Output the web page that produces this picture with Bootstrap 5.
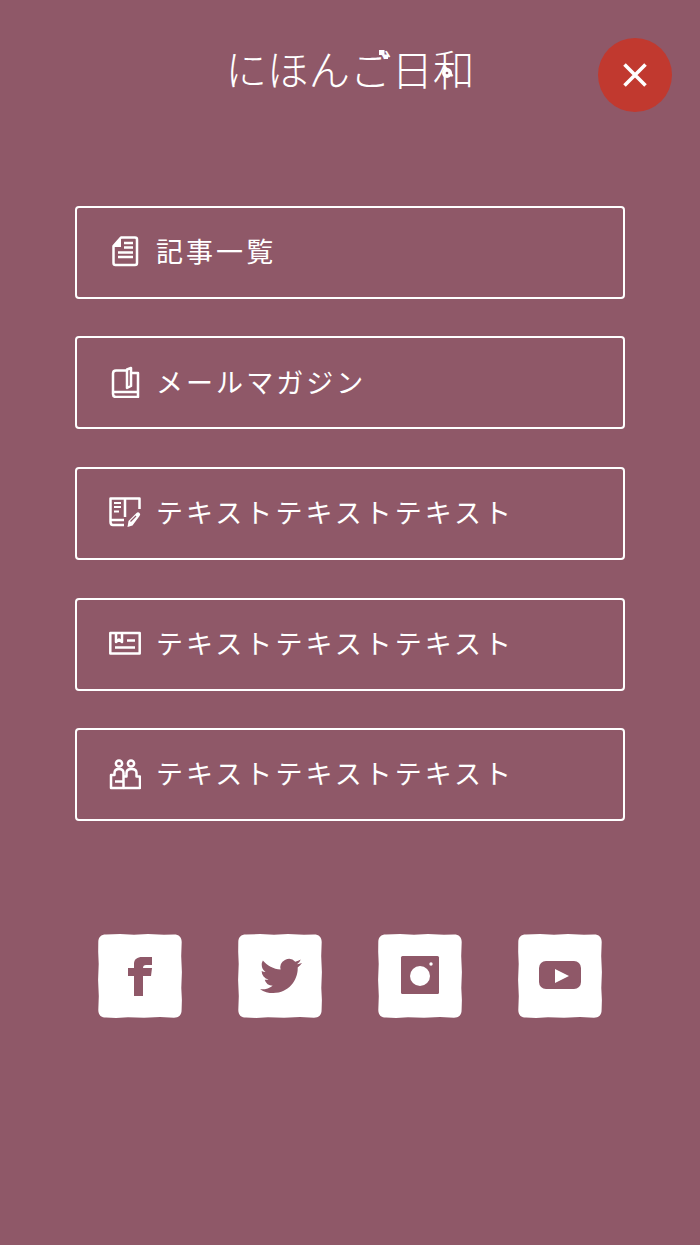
<!DOCTYPE html>
<html lang="ja">
<head>
  <meta charset="UTF-8">
  <title>にほんご日和</title>
  <link rel="stylesheet" href="https://cdn.jsdelivr.net/npm/bootstrap@5.3.0/dist/css/bootstrap.min.css">
  <style>
    body {
      background-color: #8f5868;
      color: #fff;
      font-family: "Noto Sans CJK JP", "Liberation Serif", serif;
    }
    .menu-page {
      width: 700px;
      height: 1245px;
      padding: 43px 75px 0;
    }
    .site-title {
      height: 162.8px;
      font-size: 41.5px;
      line-height: 50px;
      font-weight: 300;
      white-space: nowrap;
    }
    .title-inner {
      display: inline-block;
    }
    .title-dots {
      position: absolute;
      left: 150.5px;
      top: 7px;
      width: 12px;
      height: 12px;
    }
    .title-flower {
      position: absolute;
      left: 217px;
      top: 25px;
      width: 10px;
      height: 10px;
    }
    .close-btn {
      position: absolute;
      top: 38px;
      right: 28px;
      width: 74px;
      height: 74px;
      border: 0;
      border-radius: 50%;
      background-color: #c1392f;
      padding: 0;
    }
    .menu-list {
      gap: 37.6px;
    }
    .menu-item {
      height: 93px;
      padding-left: 32px;
      padding-bottom: 2px;
      gap: 15px;
      border: 2px solid #fff;
      border-radius: 4px;
      color: #fff;
      font-size: 27px;
      letter-spacing: 3.05px;
      font-weight: 400;
      text-decoration: none;
      white-space: nowrap;
    }
    .menu-item:hover {
      color: #fff;
    }
    .social-row {
      margin-top: 112.8px;
      padding: 0 23px;
      gap: 56px;
    }
    .social-row svg {
      display: block;
    }
    .ico-line {
      fill: none;
      stroke: #fff;
      stroke-width: 2.5;
      stroke-linejoin: round;
    }
    .ico-cut {
      fill: #8f5868;
    }
    .tile-bg {
      fill: #fff;
    }
  </style>
</head>
<body>

  <svg width="0" height="0" class="position-absolute">
    <defs>
      <path id="tile" d="M8 .4 L22 .1 L36 .8 L50 .1 L66 .8 L76 .4 C81 .4 83.600 3 83.700 8 L83.200 22 L83.900 38 L83.300 54 L83.900 66 L83.600 76 C83.600 81 81 83.600 76 83.700 L62 83.100 L46 83.800 L30 83.200 L18 83.900 L8 83.600 C3 83.600 .4 81 .3 76 L.8 62 L.1 46 L.7 30 L.2 18 L.3 8 C.4 3 3 .4 8 .4 Z"/>
    </defs>
  </svg>

  <div class="menu-page position-relative">
    <header class="site-title text-center">
      <span class="title-inner position-relative">にほんご日和
        <svg class="title-dots" viewBox="0 0 12 12"><rect x="3" y="0" width="5.500" height="5" fill="#fff"/><rect x="8" y="4.500" width="4" height="4.500" fill="#fff"/></svg>
        <svg class="title-flower" viewBox="0 0 10 10"><circle cx="5" cy="5" r="5" fill="#fff"/><circle cx="5" cy="5" r="1.300" fill="#8f5868"/></svg>
      </span>
    </header>

    <button class="close-btn d-flex align-items-center justify-content-center" type="button" aria-label="Close">
      <svg width="26" height="26" viewBox="0 0 26 26"><path d="M2.500 2.500 L23.500 23.500 M23.500 2.500 L2.500 23.500" stroke="#fff" stroke-width="3.600" fill="none"/></svg>
    </button>

    <nav class="menu-list d-flex flex-column">
      <a class="menu-item d-flex align-items-center" href="#">
        <svg width="32" height="32" viewBox="0 0 32 32">
          <path class="ico-line" d="M4.500 11 L12 2.500 H26 Q28 2.500 28 4.500 V28 Q28 30 26 30 H6.500 Q4.500 30 4.500 28 Z"/>
          <path d="M12 2 V12 H4 Z" fill="#fff"/>
          <path d="M15 8 H24 M15 12.500 H24 M9 17.500 H24 M9 22 H24" stroke="#fff" stroke-width="2.400"/>
        </svg>
        <span>記事一覧</span>
      </a>
      <a class="menu-item d-flex align-items-center" href="#">
        <svg width="32" height="32" viewBox="0 0 32 32">
          <path class="ico-line" d="M18 4.500 H7 Q4 4.500 4 7.500 V28 Q4 31 7 31 H29 V7 H23"/>
          <path class="ico-line" d="M18 3.500 L22 2 V20 L18 22 Z"/>
          <path class="ico-line" d="M4 26 H29"/>
        </svg>
        <span>メールマガジン</span>
      </a>
      <a class="menu-item d-flex align-items-center" href="#">
        <svg width="32" height="32" viewBox="0 0 32 32">
          <path class="ico-line" d="M15 29 H4 Q1.500 29 1.500 26 V2.500 H30.500 V13"/>
          <path class="ico-line" d="M1.500 24 H15 M16 2.500 V21"/>
          <path d="M5 7 H12 M5 11 H12 M5 15.500 H10" stroke="#fff" stroke-width="2.200"/>
          <path d="M18.500 31 L19.500 25 L27.500 17 Q29 15.500 30.500 17 Q32 18.500 30.500 20 L23.500 29.500 Z" fill="#fff"/>
          <path d="M21.500 25.500 L27 20" stroke="#8f5868" stroke-width="1.200"/>
        </svg>
        <span>テキストテキストテキスト</span>
      </a>
      <a class="menu-item d-flex align-items-center" href="#">
        <svg width="32" height="32" viewBox="0 0 32 32">
          <rect class="ico-line" x="1.300" y="6" width="29.400" height="20.500"/>
          <path class="ico-line" d="M7 6 V15 L10 12.500 L13 15 V6"/>
          <path d="M18 13.500 H26 M6 20.500 H26" stroke="#fff" stroke-width="2.400"/>
        </svg>
        <span>テキストテキストテキスト</span>
      </a>
      <a class="menu-item d-flex align-items-center" href="#">
        <svg width="32" height="32" viewBox="0 0 32 32">
          <circle class="ico-line" cx="10" cy="5.500" r="3.100"/>
          <circle class="ico-line" cx="22" cy="5.500" r="3.100"/>
          <path class="ico-line" d="M2 30 V17 H5.500 V15 Q5.500 11 10 11 Q14.500 11 14.500 15 V30 Z"/>
          <path class="ico-line" d="M6 23.500 H14"/>
          <path class="ico-line" d="M14.500 18.500 H17.500 V15 Q17.500 11 22.500 11 Q27.500 11 27.500 15 V18.500 H31 V30 H14.500"/>
        </svg>
        <span>テキストテキストテキスト</span>
      </a>
    </nav>

    <div class="social-row d-flex">
      <a href="#" aria-label="Facebook">
        <svg width="84" height="84" viewBox="0 0 84 84">
          <use href="#tile" class="tile-bg"/>
          <path class="ico-cut" d="M36 62 V42 H30 V34 H36 V30 C36 25 39.500 23 44 23 H54 V31 H48 C46 31 45 32 45 34 H54 L53 42 H45 V62 Z"/>
        </svg>
      </a>
      <a href="#" aria-label="Twitter">
        <svg width="84" height="84" viewBox="0 0 84 84">
          <use href="#tile" class="tile-bg"/>
          <path class="ico-cut" transform="translate(22 21) scale(1.750)" d="M23.953 4.57a10 10 0 01-2.825.775 4.958 4.958 0 002.163-2.723c-.951.555-2.005.959-3.127 1.184a4.92 4.92 0 00-8.384 4.482C7.69 8.095 4.067 6.13 1.64 3.162a4.822 4.822 0 00-.666 2.475c0 1.71.87 3.213 2.188 4.096a4.904 4.904 0 01-2.228-.616v.06a4.923 4.923 0 003.946 4.827 4.996 4.996 0 01-2.212.085 4.936 4.936 0 004.604 3.417 9.867 9.867 0 01-6.102 2.105c-.39 0-.779-.023-1.17-.067a13.995 13.995 0 007.557 2.209c9.053 0 13.998-7.496 13.998-13.985 0-.21 0-.42-.015-.63A9.935 9.935 0 0024 4.59z"/>
        </svg>
      </a>
      <a href="#" aria-label="Instagram">
        <svg width="84" height="84" viewBox="0 0 84 84">
          <use href="#tile" class="tile-bg"/>
          <rect class="ico-cut" x="23" y="22" width="38" height="38" rx="1.500"/>
          <circle class="tile-bg" cx="42" cy="42" r="10"/>
          <circle class="tile-bg" cx="53" cy="30" r="1.700"/>
        </svg>
      </a>
      <a href="#" aria-label="YouTube">
        <svg width="84" height="84" viewBox="0 0 84 84">
          <use href="#tile" class="tile-bg"/>
          <rect class="ico-cut" x="21" y="27" width="42" height="28" rx="7"/>
          <path class="tile-bg" d="M37 35 L51 42 L37 49 Z"/>
        </svg>
      </a>
    </div>
  </div>

  <script src="https://cdn.jsdelivr.net/npm/bootstrap@5.3.0/dist/js/bootstrap.bundle.min.js"></script>
</body>
</html>
